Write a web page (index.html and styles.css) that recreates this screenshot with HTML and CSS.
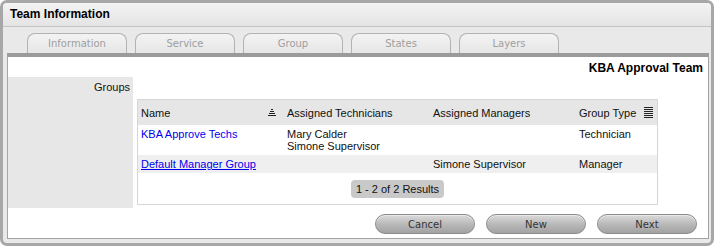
FILE: index.html
```html
<!DOCTYPE html>
<html lang="en">
<head>
    <meta charset="UTF-8">
    <title>Team Information</title>
    <link rel="stylesheet" href="styles.css">
</head>
<body>
<div class="window">
    <div class="window-title">Team Information</div>
    <div class="tabs">
        <div class="tab">Information</div>
        <div class="tab">Service</div>
        <div class="tab">Group</div>
        <div class="tab">States</div>
        <div class="tab">Layers</div>
    </div>
    <div class="panel">
        <div class="record-name">KBA Approval Team</div>
        <div class="field-row">
            <div class="field-label">Groups</div>
            <div class="field-value">
                <div class="grid">
                    <table>
                        <colgroup>
                            <col class="col-std">
                            <col class="col-std">
                            <col class="col-std">
                            <col>
                        </colgroup>
                        <thead>
                        <tr>
                            <th class="col-name">
                                <div class="th-inner">
                                    <span>Name</span>
                                    <svg class="sort-icon" width="8" height="7" viewBox="0 0 8 7">
                                        <rect x="3" y="0" width="2" height="1"/>
                                        <rect x="2" y="2" width="4" height="1"/>
                                        <rect x="1" y="4" width="6" height="1"/>
                                        <rect x="0" y="6" width="8" height="1"/>
                                    </svg>
                                </div>
                            </th>
                            <th>Assigned Technicians</th>
                            <th>Assigned Managers</th>
                            <th class="col-type">
                                <div class="th-inner">
                                    <span>Group Type</span>
                                    <svg class="menu-icon" width="9" height="11" viewBox="0 0 9 11">
                                        <rect x="0" y="0" width="9" height="1"/>
                                        <rect x="0" y="2" width="9" height="1"/>
                                        <rect x="0" y="4" width="9" height="1"/>
                                        <rect x="0" y="6" width="9" height="1"/>
                                        <rect x="0" y="8" width="9" height="1"/>
                                        <rect x="0" y="10" width="9" height="1"/>
                                    </svg>
                                </div>
                            </th>
                        </tr>
                        </thead>
                        <tbody>
                        <tr class="row-tall">
                            <td><a href="#" class="plain-link">KBA Approve Techs</a></td>
                            <td>Mary Calder<br>Simone Supervisor</td>
                            <td></td>
                            <td>Technician</td>
                        </tr>
                        <tr class="row-alt">
                            <td><a href="#">Default Manager Group</a></td>
                            <td></td>
                            <td>Simone Supervisor</td>
                            <td>Manager</td>
                        </tr>
                        </tbody>
                    </table>
                    <div class="pager"><span class="pager-count">1 - 2 of 2 Results</span></div>
                </div>
            </div>
        </div>
        <div class="actions">
            <button class="btn">Cancel</button>
            <button class="btn">New</button>
            <button class="btn">Next</button>
        </div>
    </div>
</div>
</body>
</html>
```

FILE: styles.css
```css
body {
    margin: 0;
    background: #fff;
    font-family: "Liberation Sans", Arial, sans-serif;
    color: #111;
}
.window {
    box-sizing: border-box;
    width: 714px;
    height: 246px;
    border: 3px solid #a7a7a7;
    border-radius: 7px;
    background: #e9e9e9;
    display: flex;
    flex-direction: column;
}
.window-title {
    height: 23px;
    line-height: 23px;
    padding-left: 7px;
    font-size: 12px;
    font-weight: bold;
    color: #000;
    background: linear-gradient(#f3f3f3, #e4e4e4);
    border-bottom: 1px solid #c4c4c4;
    border-radius: 4px 4px 0 0;
}
.tabs {
    display: flex;
    gap: 8px;
    padding: 6px 0 0 24px;
}
.tab {
    box-sizing: border-box;
    width: 100px;
    height: 20px;
    line-height: 20px;
    text-align: center;
    font-family: "DejaVu Sans", sans-serif;
    font-size: 10px;
    color: #9e9e9e;
    border: 1px solid #b3b3b3;
    border-bottom: none;
    border-radius: 8px 8px 0 0;
    background: linear-gradient(#f3f3f3, #e6e6e6);
}
.panel {
    flex: 1;
    margin: 0 2px 4px 4px;
    border: 1px solid #a3a3a3;
    border-top: 4px solid #9b9b9b;
    background: #fff;
}
.record-name {
    padding: 5px 5px 3px;
    line-height: 12px;
    font-size: 12px;
    font-weight: bold;
    text-align: right;
    color: #000;
}
.field-row {
    display: flex;
}
.field-label {
    width: 125px;
    box-sizing: border-box;
    padding: 4px 3px 0 0;
    background: #e7e7e7;
    text-align: right;
    font-size: 11px;
    line-height: 13px;
}
.field-value {
    padding: 22px 0 3px 4px;
}
.grid {
    width: 521px;
    box-sizing: border-box;
    border: 1px solid #d6d6d6;
}
.grid table {
    width: 100%;
    table-layout: fixed;
    border-collapse: collapse;
    font-size: 11px;
}
.grid .col-std {
    width: 146px;
}
.grid th {
    height: 25px;
    padding: 0 3px;
    background: #e6e6e6;
    font-weight: normal;
    text-align: left;
    white-space: nowrap;
}
.grid th.col-type {
    padding-right: 4px;
}
.grid th.col-name {
    padding-right: 8px;
}
.th-inner {
    display: flex;
    align-items: center;
    justify-content: space-between;
}
.sort-icon, .menu-icon {
    fill: #222;
}
.grid td {
    padding: 3px 3px;
    line-height: 12px;
    vertical-align: top;
    white-space: nowrap;
}
.row-tall td {
    height: 24px;
}
.row-alt td {
    background: #efefef;
}
.grid a {
    color: #0000ee;
}
.grid a.plain-link {
    text-decoration: none;
}
.pager {
    padding: 6px 0;
    text-align: center;
    line-height: 18px;
}
.pager-count {
    display: inline-block;
    padding: 0 5px;
    height: 18px;
    border-radius: 4px;
    background: #c9c9c9;
    font-size: 11px;
}
.actions {
    display: flex;
    justify-content: flex-end;
    gap: 11px;
    padding: 6px 11px 0 0;
}
.btn {
    box-sizing: border-box;
    width: 100px;
    height: 20px;
    padding: 0;
    border: 1px solid #8c8c8c;
    border-radius: 10px;
    background: linear-gradient(#dadada, #b4b4b4 60%, #a2a2a2);
    box-shadow: inset 0 1px 0 #e8e8e8;
    font-family: "DejaVu Sans", sans-serif;
    font-size: 10px;
    color: #333;
}
```
